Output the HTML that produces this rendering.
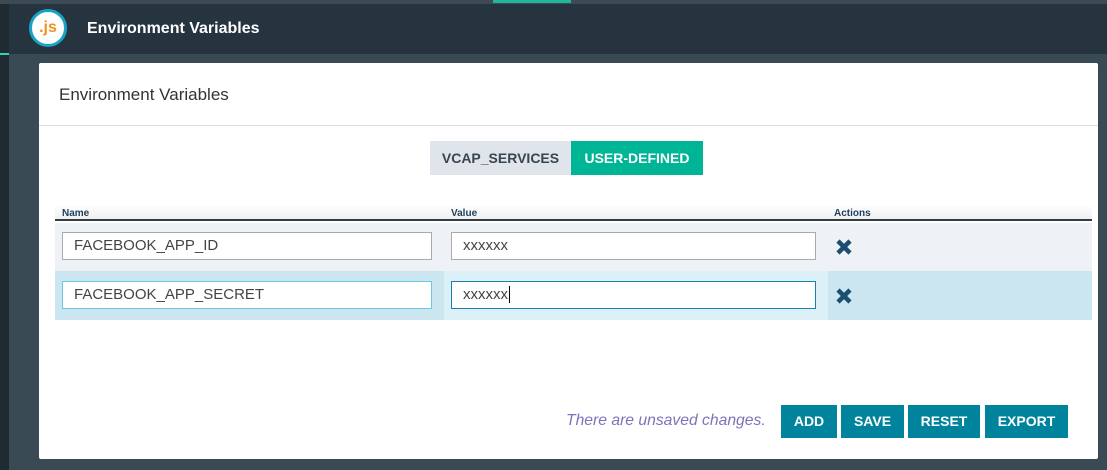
<!DOCTYPE html>
<html><head><style>
*{margin:0;padding:0;box-sizing:border-box}
body{width:1107px;height:470px;background:#3a4a55;font-family:"Liberation Sans",Arial,sans-serif;position:relative;overflow:hidden}
.abs{position:absolute}
.inp{position:absolute;background:#fff;border:1px solid #aaa;font-size:15px;color:#444;padding-left:11px;line-height:26px}
.btn{position:absolute;top:405px;height:33px;background:#00849e;color:#fff;font-weight:bold;font-size:14px;text-align:center;line-height:33px}
.x{position:absolute;left:835px;width:18px;height:18px}
</style></head><body>
<div class="abs" style="left:0;top:0;width:1107px;height:4px;background:#3d4a53"></div>
<div class="abs" style="left:493px;top:0;width:78px;height:3px;background:#1fb89c"></div>
<div class="abs" style="left:0;top:4px;width:1107px;height:50px;background:#263440"></div>
<div class="abs" style="left:0;top:4px;width:9px;height:466px;background:#1f2a31"></div>
<div class="abs" style="left:0;top:53px;width:9px;height:2px;background:#2cd3b8"></div>
<div class="abs" style="left:29px;top:9px;width:38px;height:38px;border-radius:50%;background:#fff;border:3px solid #1aa3c4;color:#f0921e;font-size:16px;font-weight:bold;text-align:center;line-height:31px">.js</div>
<div class="abs" style="left:87px;top:20px;color:#fff;font-weight:bold;font-size:16px">Environment Variables</div>
<div class="abs" style="left:39px;top:63px;width:1059px;height:396px;background:#fff;border-radius:2px"></div>
<div class="abs" style="left:59px;top:85px;color:#333;font-size:17px">Environment Variables</div>
<div class="abs" style="left:39px;top:125px;width:1059px;height:1px;background:#ddd"></div>
<div class="abs" style="left:430px;top:141px;width:141px;height:34px;background:#dfe5ea;color:#3a4550;font-weight:bold;font-size:14px;text-align:center;line-height:34px">VCAP_SERVICES</div>
<div class="abs" style="left:571px;top:141px;width:132px;height:34px;background:#00b596;color:#fff;font-weight:bold;font-size:14px;text-align:center;line-height:34px">USER-DEFINED</div>
<div class="abs" style="left:55px;top:205px;width:1037px;height:16px;background:linear-gradient(#fff,#f0f0f0);border-bottom:2px solid #333d45"></div>
<div class="abs" style="left:62px;top:208px;font-size:10px;font-weight:bold;color:#1d3f5e">Name</div>
<div class="abs" style="left:451px;top:208px;font-size:10px;font-weight:bold;color:#1d3f5e">Value</div>
<div class="abs" style="left:834px;top:208px;font-size:10px;font-weight:bold;color:#1d3f5e">Actions</div>
<div class="abs" style="left:55px;top:223px;width:1037px;height:48px;background:#eef1f5"></div>
<div class="abs" style="left:55px;top:271px;width:389px;height:49px;background:#cbe6f1"></div>
<div class="abs" style="left:444px;top:271px;width:384px;height:49px;background:#dcf0f8"></div>
<div class="abs" style="left:828px;top:271px;width:264px;height:49px;background:#cbe6f1"></div>
<div class="inp" style="left:62px;top:232px;width:370px;height:28px">FACEBOOK_APP_ID</div>
<div class="inp" style="left:451px;top:232px;width:365px;height:28px">xxxxxx</div>
<div class="inp" style="left:62px;top:281px;width:370px;height:28px;border-color:#6cc7e0">FACEBOOK_APP_SECRET</div>
<div class="inp" style="left:451px;top:281px;width:365px;height:28px;border-color:#1a7fae">xxxxxx<span style="border-left:1px solid #000;margin-left:1px"></span></div>
<svg class="x" style="top:238px" viewBox="0 0 18 18"><path d="M3 3L15 15M15 3L3 15" stroke="#1c4e72" stroke-width="4.5"/></svg>
<svg class="x" style="top:287px" viewBox="0 0 18 18"><path d="M3 3L15 15M15 3L3 15" stroke="#1c4e72" stroke-width="4.5"/></svg>
<div class="abs" style="left:566px;top:412px;font-style:italic;color:#7c74b8;font-size:15.7px">There are unsaved changes.</div>
<div class="btn" style="left:781px;width:56px">ADD</div>
<div class="btn" style="left:841px;width:63px">SAVE</div>
<div class="btn" style="left:908px;width:72px">RESET</div>
<div class="btn" style="left:985px;width:83px">EXPORT</div>
</body></html>
